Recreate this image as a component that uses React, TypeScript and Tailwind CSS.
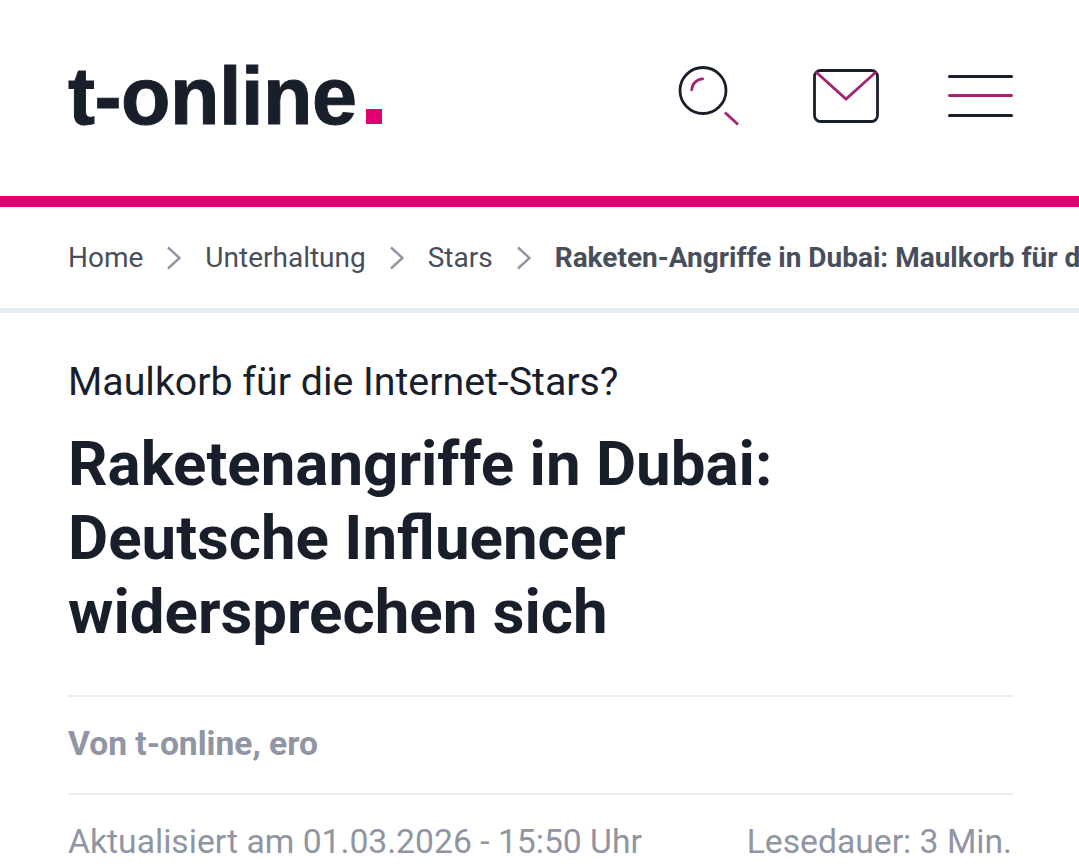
import React from "react";

function SearchIcon() {
  return (
    <svg width="62" height="62" viewBox="0 0 62 62" fill="none" strokeWidth="2.8">
      <circle cx="25" cy="25.5" r="23" stroke="#191e2b" />
      <path d="M13.7 24.8c.3-5.8 5-10.7 11-11" stroke="#a3246f" strokeLinecap="round" />
      <path d="M47 47.5l13 12" stroke="#a3246f" />
    </svg>
  );
}

function MailIcon() {
  return (
    <svg width="66" height="54" viewBox="0 0 66 54" fill="none" strokeWidth="2.8">
      <rect x="1.5" y="1.5" width="63" height="51" rx="6" stroke="#191e2b" />
      <path d="M3 3l30 27L63 3" stroke="#a3246f" />
    </svg>
  );
}

function MenuIcon() {
  return (
    <div className="flex w-[65px] flex-col gap-[16.5px]">
      <div className="h-[3px] rounded-full bg-[#191e2b]" />
      <div className="h-[3px] rounded-full bg-[#b01f74]" />
      <div className="h-[3px] rounded-full bg-[#191e2b]" />
    </div>
  );
}

function Chevron() {
  return (
    <svg width="14" height="24" viewBox="0 0 14 24" fill="none" className="shrink-0">
      <path d="M1 1.5L12.5 12 1 22.5" stroke="#8f95a3" strokeWidth="2.4" />
    </svg>
  );
}

export default function App() {
  return (
    <div className="h-[866px] w-[1079px] overflow-hidden bg-white font-['Roboto',sans-serif] text-[#191e2b]">
      <header className="flex h-[196px] items-center justify-between pl-[68px] pr-[66px]">
        <div className="flex items-baseline pb-[4px] font-['Liberation_Sans',sans-serif] text-[81px] font-bold leading-none tracking-[-0.5px] [-webkit-text-stroke:1px_#191e2b]">
          t-online
          <span className="ml-[10px] inline-block h-[15px] w-[16px] bg-[#e00072]" />
        </div>
        <div className="mb-[5px] flex items-center">
          <div className="mr-[73px]">
            <SearchIcon />
          </div>
          <div className="mr-[69px]">
            <MailIcon />
          </div>
          <MenuIcon />
        </div>
      </header>
      <div className="h-[11px] bg-[#e00072]" />
      <nav className="flex h-[106px] items-center gap-[24px] overflow-hidden whitespace-nowrap border-b-[5px] border-[#e8edf3] pl-[68px] text-[28px] text-[#484f5b]">
        <span>Home</span>
        <Chevron />
        <span>Unterhaltung</span>
        <Chevron />
        <span>Stars</span>
        <Chevron />
        <span className="font-bold">Raketen-Angriffe in Dubai: Maulkorb für die Internet-Stars?</span>
      </nav>
      <main className="pl-[68px] pr-[66px]">
        <p className="mt-[44px] text-[39.3px] leading-[50px]">Maulkorb für die Internet-Stars?</p>
        <h1 className="mt-[20px] text-[61.8px] font-bold leading-[74px]">
          Raketenangriffe in Dubai:
          <br />
          Deutsche Influencer
          <br />
          widersprechen sich
        </h1>
        <div className="mt-[46px] border-t-2 border-[#ebedef] pb-[29px] pt-[27px] text-[33.6px] font-bold leading-[40px] text-[#8f95a3]">
          Von t-online, ero
        </div>
        <div className="flex justify-between border-t-2 border-[#ebedef] pr-[1px] pt-[27px] text-[33.7px] leading-[40px] text-[#8f95a3]">
          <span>Aktualisiert am 01.03.2026 - 15:50 Uhr</span>
          <span>Lesedauer: 3 Min.</span>
        </div>
      </main>
    </div>
  );
}
